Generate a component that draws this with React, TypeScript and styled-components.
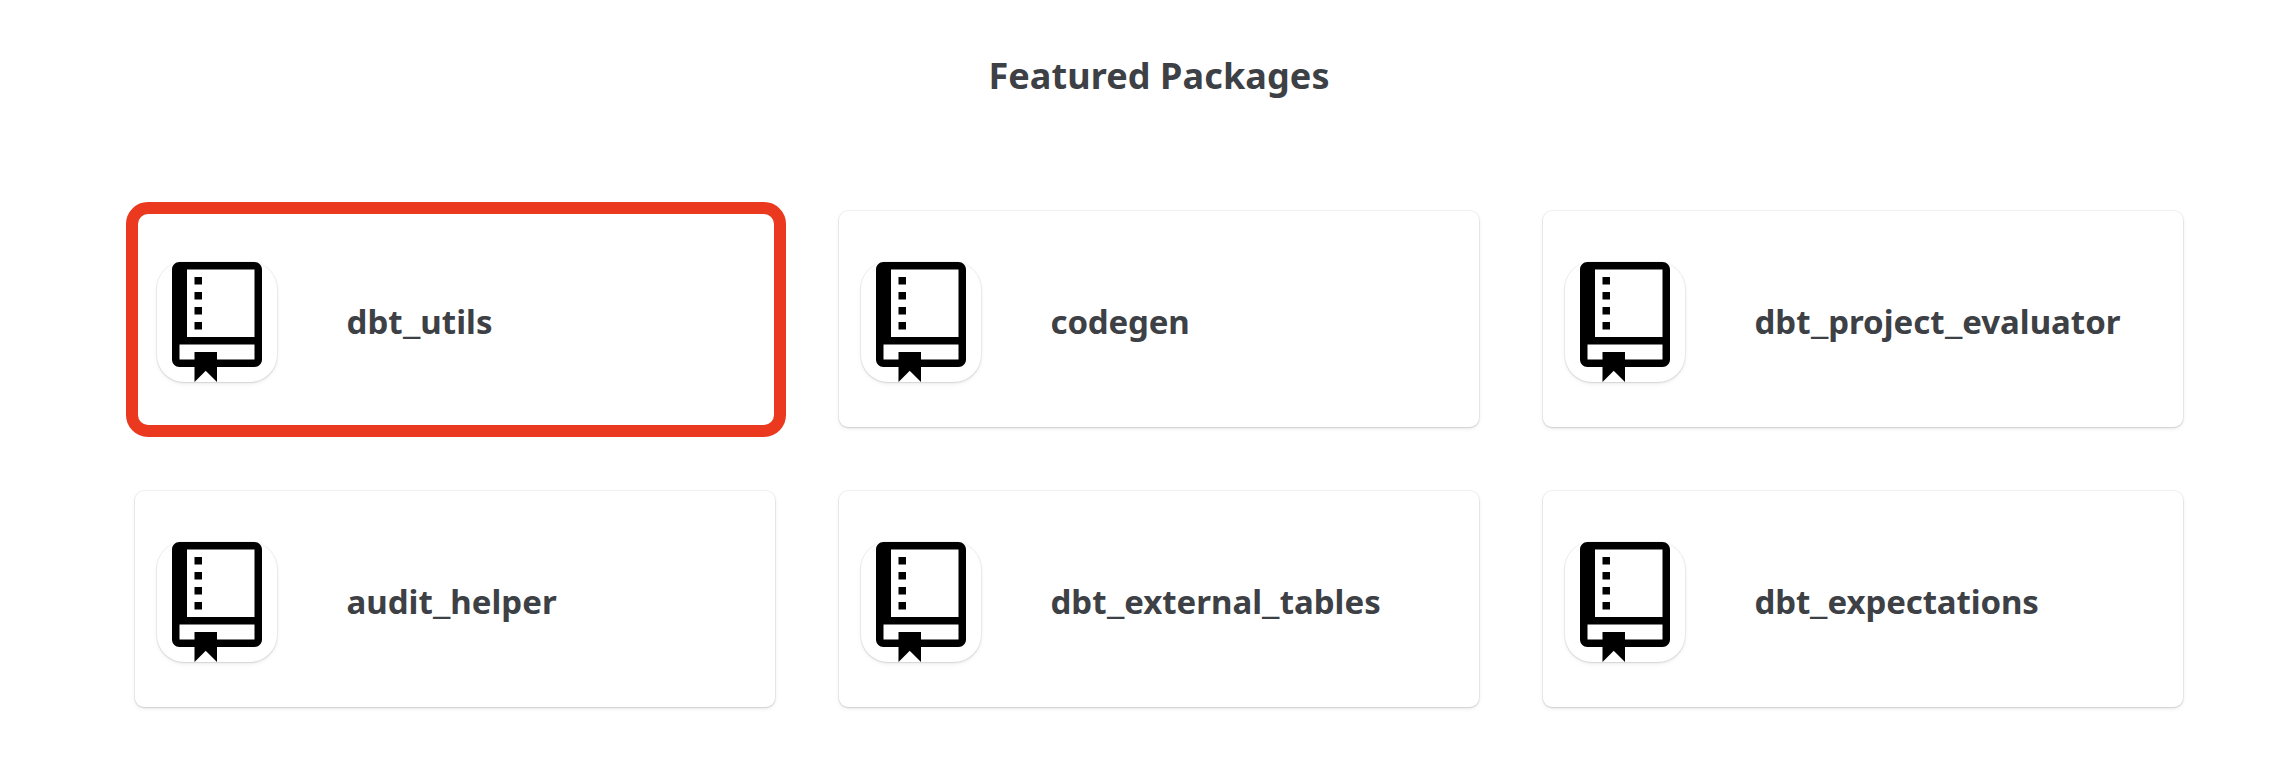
import React from 'react';
import styled, { createGlobalStyle } from 'styled-components';

const GlobalStyle = createGlobalStyle`
  * { box-sizing: border-box; }
  body {
    margin: 0;
    background: #fff;
    color: #3d4045;
    font-family: "Noto Sans", "Open Sans", sans-serif;
    -webkit-font-smoothing: antialiased;
  }
`;

const Page = styled.main`
  min-height: 776px;
  padding: 52px 102px 0 135px;
  overflow: hidden;
`;

const Title = styled.h2`
  margin: 0 0 111px;
  padding-right: 1px;
  font-size: 36px;
  font-weight: 700;
  line-height: 48px;
  letter-spacing: 0.1px;
  text-align: center;
`;

const Grid = styled.div`
  display: grid;
  grid-template-columns: repeat(3, 640px);
  grid-auto-rows: 216px;
  gap: 64px;
`;

const Card = styled.article`
  position: relative;
  display: flex;
  align-items: center;
  padding: 6px 0 0 22px;
  border-radius: 9px;
  background: #fff;
  box-shadow: 0 0 0 1px rgba(0, 0, 0, 0.045), 0 1px 2px rgba(0, 0, 0, 0.12), 0 2px 5px rgba(0, 0, 0, 0.06);
`;

const Highlight = styled.div`
  position: absolute;
  inset: -9.5px -11px -10px -9px;
  border: 12px solid #ea391e;
  border-radius: 22px;
`;

const IconTile = styled.div`
  display: flex;
  justify-content: center;
  flex: none;
  width: 120px;
  height: 120px;
  border-radius: 27px;
  background: #fff;
  box-shadow: 0 0 0 1px rgba(0, 0, 0, 0.04), 0 1px 2px rgba(0, 0, 0, 0.1), 0 2px 5px rgba(0, 0, 0, 0.06);
`;

const Name = styled.h3<{ $tracking: number }>`
  margin: 0 0 0 69.5px;
  font-size: 33px;
  font-weight: 700;
  line-height: 44px;
  letter-spacing: ${(p) => p.$tracking}px;
  white-space: nowrap;
`;

const Underscore = styled.span`
  display: inline-block;
  margin: 0 2px;
  transform: scaleX(1.28);
`;

interface Package {
  name: string;
  tracking?: number;
  featured?: boolean;
}

const packages: Package[] = [
  { name: 'dbt_utils', tracking: 0.05, featured: true },
  { name: 'codegen', tracking: -0.15 },
  { name: 'dbt_project_evaluator' },
  { name: 'audit_helper' },
  { name: 'dbt_external_tables' },
  { name: 'dbt_expectations', tracking: -0.13 },
];

const RepoIcon = () => (
  <svg width="90" height="120" viewBox="0 0 12 16" fill="#000" aria-hidden="true">
    <path
      fillRule="evenodd"
      d="M4 9H3V8h1v1zm0-3H3v1h1V6zm0-2H3v1h1V4zm0-2H3v1h1V2zm8-1v12c0 .55-.45 1-1 1H6v2l-1.5-1.5L3 16v-2H1c-.55 0-1-.45-1-1V1c0-.55.45-1 1-1h10c.55 0 1 .45 1 1zm-1 10H1v2h2v-1h3v1h5v-2zm0-10H2v9h9V1z"
    />
  </svg>
);

const PackageCard = ({ name, tracking = 0, featured }: Package) => (
  <Card>
    <IconTile>
      <RepoIcon />
    </IconTile>
    <Name $tracking={tracking}>
      {name.split('_').map((part, i) => (
        <React.Fragment key={i}>
          {i > 0 && <Underscore>_</Underscore>}
          {part}
        </React.Fragment>
      ))}
    </Name>
    {featured && <Highlight />}
  </Card>
);

export default function App() {
  return (
    <>
      <GlobalStyle />
      <Page>
        <Title>Featured Packages</Title>
        <Grid>
          {packages.map((p) => (
            <PackageCard key={p.name} {...p} />
          ))}
        </Grid>
      </Page>
    </>
  );
}
